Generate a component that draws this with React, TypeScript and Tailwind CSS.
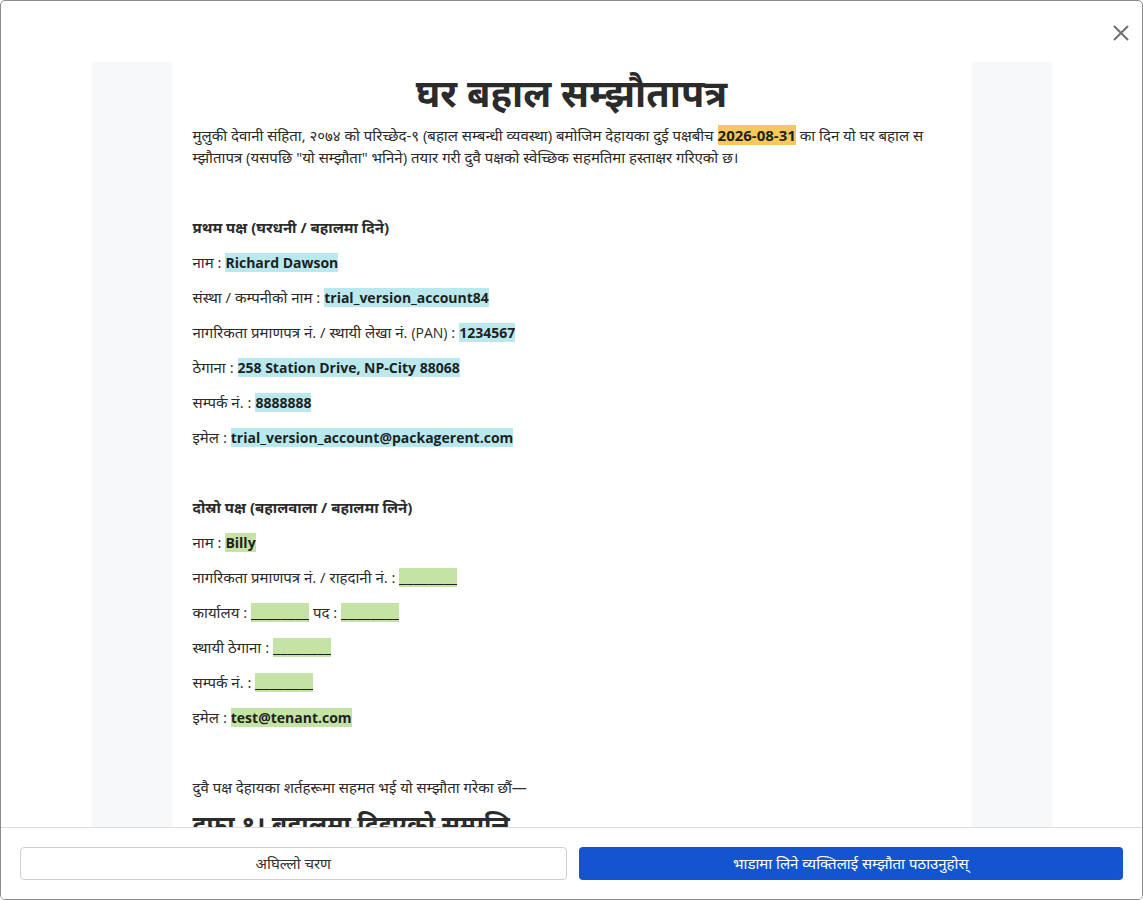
import React from "react";

const Cy = ({ children }: { children: React.ReactNode }) => (
  <span className="bg-[#b9e9ee] font-bold text-[14px] text-[#1f1f1f]">{children}</span>
);
const Gr = ({ children }: { children: React.ReactNode }) => (
  <span className="bg-[#c6e3a6] font-bold text-[14px] text-[#1f1f1f]">{children}</span>
);
const Blank = () => (
  <span className="inline-block align-top w-[58px] h-[19px] mt-[1px] overflow-hidden bg-[#c6e3a6] font-bold text-[14px] leading-[19px] text-[#1f1f1f]">
    <span className="inline-block origin-left scale-x-[1.28]">________</span>
  </span>
);

const Line = ({ children, bold }: { children?: React.ReactNode; bold?: boolean }) => (
  <p className={`h-[21px] leading-[21px] mb-[14px] whitespace-nowrap ${bold ? "font-bold" : ""}`}>{children}</p>
);

export default function App() {
  return (
    <div
      className="relative w-[1143px] h-[900px] flex flex-col bg-white border border-[#8c8c8c] rounded-[5px] overflow-hidden text-[#2b2b2b]"
      style={{ fontFamily: '"Open Sans", "Noto Sans", sans-serif' }}
    >
      <button className="absolute left-[1112px] top-[24px] w-[16px] h-[16px] text-[#707070]" aria-label="close">
        <svg width="16" height="16" viewBox="0 0 16 16" fill="none" stroke="currentColor" strokeWidth="2">
          <path d="M1 1 L15 15 M15 1 L1 15" />
        </svg>
      </button>

      <div className="flex-1 overflow-hidden pt-[61px]">
        <div className="mx-auto w-[960px] bg-[#f7f8fa] px-[80px] h-full">
          <div className="bg-white h-full px-[21px] text-[15px]">
            <h1 className="text-center font-bold text-[38px] leading-[50px] pt-[5px] mb-[7px] text-[#2b2b2b]">
              घर बहाल सम्झौतापत्र
            </h1>
            <p className="leading-[22px] mb-[49px]">
              <span className="block whitespace-nowrap">
                मुलुकी देवानी संहिता, २०७४ को परिच्छेद-९ (बहाल सम्बन्धी व्यवस्था) बमोजिम देहायका दुई पक्षबीच{" "}
                <span className="bg-[#f7c95c] font-bold text-[15px] text-[#1f1f1f]">2026-08-31</span> का दिन यो घर बहाल स
              </span>
              <span className="block whitespace-nowrap">
                म्झौतापत्र (यसपछि "यो सम्झौता" भनिने) तयार गरी दुवै पक्षको स्वेच्छिक सहमतिमा हस्ताक्षर गरिएको छ।
              </span>
            </p>

            <Line bold>प्रथम पक्ष (घरधनी / बहालमा दिने)</Line>
            <Line>
              नाम : <Cy>Richard Dawson</Cy>
            </Line>
            <Line>
              संस्था / कम्पनीको नाम : <Cy>trial_version_account84</Cy>
            </Line>
            <Line>
              नागरिकता प्रमाणपत्र नं. / स्थायी लेखा नं. <span className="text-[14px]">(PAN)</span> : <Cy>1234567</Cy>
            </Line>
            <Line>
              ठेगाना : <Cy>258 Station Drive, NP-City 88068</Cy>
            </Line>
            <Line>
              सम्पर्क नं. : <Cy>8888888</Cy>
            </Line>
            <Line>
              इमेल : <Cy>trial_version_account@packagerent.com</Cy>
            </Line>
            <Line />

            <Line bold>दोस्रो पक्ष (बहालवाला / बहालमा लिने)</Line>
            <Line>
              नाम : <Gr>Billy</Gr>
            </Line>
            <Line>
              नागरिकता प्रमाणपत्र नं. / राहदानी नं. : <Blank />
            </Line>
            <Line>
              कार्यालय : <Blank /> पद : <Blank />
            </Line>
            <Line>
              स्थायी ठेगाना : <Blank />
            </Line>
            <Line>
              सम्पर्क नं. : <Blank />
            </Line>
            <Line>
              इमेल : <Gr>test@tenant.com</Gr>
            </Line>
            <Line />

            <p className="h-[21px] leading-[21px] mb-[10px] whitespace-nowrap">
              दुवै पक्ष देहायका शर्तहरूमा सहमत भई यो सम्झौता गरेका छौं—
            </p>
            <h2 className="font-bold text-[25px] leading-[32px] whitespace-nowrap">दफा १। बहालमा दिइएको सम्पत्ति</h2>
          </div>
        </div>
      </div>

      <div className="h-[72px] shrink-0 border-t border-[#dcdcdc] bg-white px-[19px] flex items-start pt-[19px] gap-[12px]">
        <button className="flex-1 h-[33px] rounded-[4px] border border-[#cfcfcf] bg-white text-[15px] text-[#333]">
          अघिल्लो चरण
        </button>
        <button className="flex-1 h-[33px] rounded-[4px] bg-[#1255cf] text-[15px] text-white">
          भाडामा लिने व्यक्तिलाई सम्झौता पठाउनुहोस्
        </button>
      </div>
    </div>
  );
}
